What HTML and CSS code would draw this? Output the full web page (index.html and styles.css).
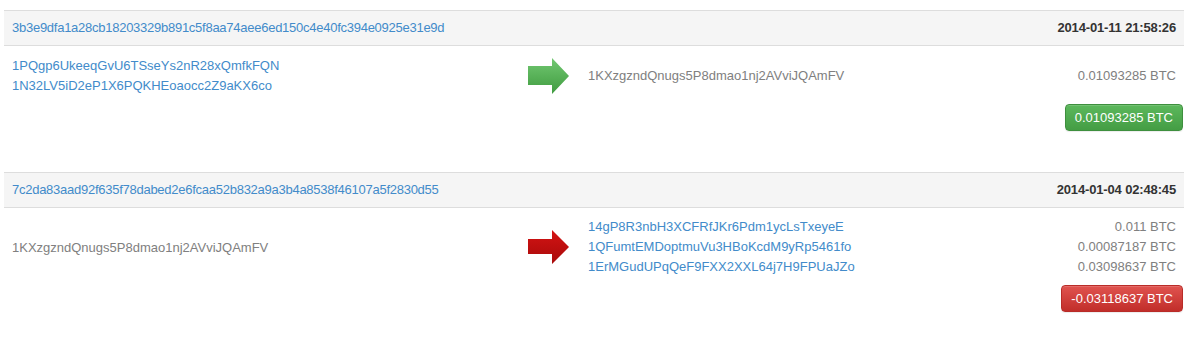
FILE: index.html
```html
<!DOCTYPE html>
<html>
<head>
<meta charset="utf-8">
<link rel="stylesheet" href="styles.css">
</head>
<body>
<div class="page">
  <div class="tx">
    <div class="tx-head">
      <a class="link hash" href="#">3b3e9dfa1a28cb18203329b891c5f8aa74aee6ed150c4e40fc394e0925e31e9d</a>
      <span class="date">2014-01-11 21:58:26</span>
    </div>
    <div class="tx-body">
      <div class="cell col-in">
        <a class="link" href="#">1PQgp6UkeeqGvU6TSseYs2nR28xQmfkFQN</a>
        <a class="link" href="#">1N32LV5iD2eP1X6PQKHEoaocc2Z9aKX6co</a>
      </div>
      <div class="cell col-arrow">
        <svg width="41" height="36" viewBox="0 0 41 36">
          <defs>
            <linearGradient id="gg" x1="0" y1="0" x2="0" y2="1">
              <stop offset="0" stop-color="#72c872"/>
              <stop offset="1" stop-color="#3f9b3f"/>
            </linearGradient>
          </defs>
          <path d="M0 8 H24 V0 L41 18 L24 36 V27 H0 Z" fill="url(#gg)"/>
        </svg>
      </div>
      <div class="cell col-out">
        <span class="muted">1KXzgzndQnugs5P8dmao1nj2AVviJQAmFV</span>
      </div>
      <div class="cell col-amt">
        <span class="muted">0.01093285 BTC</span>
      </div>
    </div>
    <div class="tx-foot">
      <span class="btn btn-green">0.01093285 BTC</span>
    </div>
  </div>

  <div class="tx">
    <div class="tx-head">
      <a class="link hash" href="#">7c2da83aad92f635f78dabed2e6fcaa52b832a9a3b4a8538f46107a5f2830d55</a>
      <span class="date">2014-01-04 02:48:45</span>
    </div>
    <div class="tx-body">
      <div class="cell col-in">
        <span class="muted">1KXzgzndQnugs5P8dmao1nj2AVviJQAmFV</span>
      </div>
      <div class="cell col-arrow">
        <svg width="41" height="36" viewBox="0 0 41 36">
          <defs>
            <linearGradient id="rg" x1="0" y1="0" x2="0" y2="1">
              <stop offset="0" stop-color="#d41414"/>
              <stop offset="1" stop-color="#a80a0a"/>
            </linearGradient>
          </defs>
          <path d="M0 10 H24 V1 L41 18 L24 35 V25 H0 Z" fill="url(#rg)"/>
        </svg>
      </div>
      <div class="cell col-out">
        <a class="link" href="#">14gP8R3nbH3XCFRfJKr6Pdm1ycLsTxeyeE</a>
        <a class="link" href="#">1QFumtEMDoptmuVu3HBoKcdM9yRp5461fo</a>
        <a class="link" href="#">1ErMGudUPqQeF9FXX2XXL64j7H9FPUaJZo</a>
      </div>
      <div class="cell col-amt">
        <span class="muted">0.011 BTC</span>
        <span class="muted">0.00087187 BTC</span>
        <span class="muted">0.03098637 BTC</span>
      </div>
    </div>
    <div class="tx-foot">
      <span class="btn btn-red">-0.03118637 BTC</span>
    </div>
  </div>
</div>
</body>
</html>
```

FILE: styles.css
```css
* { box-sizing: border-box; }
html, body { margin: 0; padding: 0; background: #fff; }
body {
  font-family: "Liberation Sans", Arial, sans-serif;
  font-size: 13px;
  color: #333;
}
.page {
  padding: 10px 13px 0 4px;
}
.tx {
  width: 1180px;
  margin-bottom: 41px;
}
.tx-head {
  display: flex;
  justify-content: space-between;
  background: #f5f5f5;
  border-top: 1px solid #dddddd;
  border-bottom: 1px solid #dddddd;
  padding: 8px;
  line-height: 18px;
}
.link {
  color: #428bca;
  text-decoration: none;
}
.hash { letter-spacing: -0.26px; }
.date {
  font-weight: bold;
  color: #333;
  letter-spacing: -0.15px;
}
.tx-body {
  display: grid;
  grid-template-columns: 516px 60px 1fr auto;
  align-items: center;
  padding-top: 9px;
  line-height: 20px;
}
.col-in { padding-top: 1px; }
.cell {
  display: flex;
  flex-direction: column;
  padding-left: 8px;
  padding-right: 8px;
}
.col-arrow svg { display: block; }
.col-amt { align-items: flex-end; }
.muted { color: #808080; }
.tx-foot {
  display: flex;
  justify-content: flex-end;
  padding-top: 8px;
  padding-right: 1px;
}
.btn {
  display: inline-block;
  color: #fff;
  line-height: 17px;
  padding: 4px 9px;
  border-radius: 4px;
  border: 1px solid transparent;
  box-shadow: inset 0 1px 0 rgba(255,255,255,0.15), 0 1px 1px rgba(0,0,0,0.075);
}
.btn-green {
  background: linear-gradient(#5cb85c, #449d44);
  border-color: #3e8f3e;
}
.btn-red {
  background: linear-gradient(#e0534f, #c12e2a);
  border-color: #b92c28;
}
```
